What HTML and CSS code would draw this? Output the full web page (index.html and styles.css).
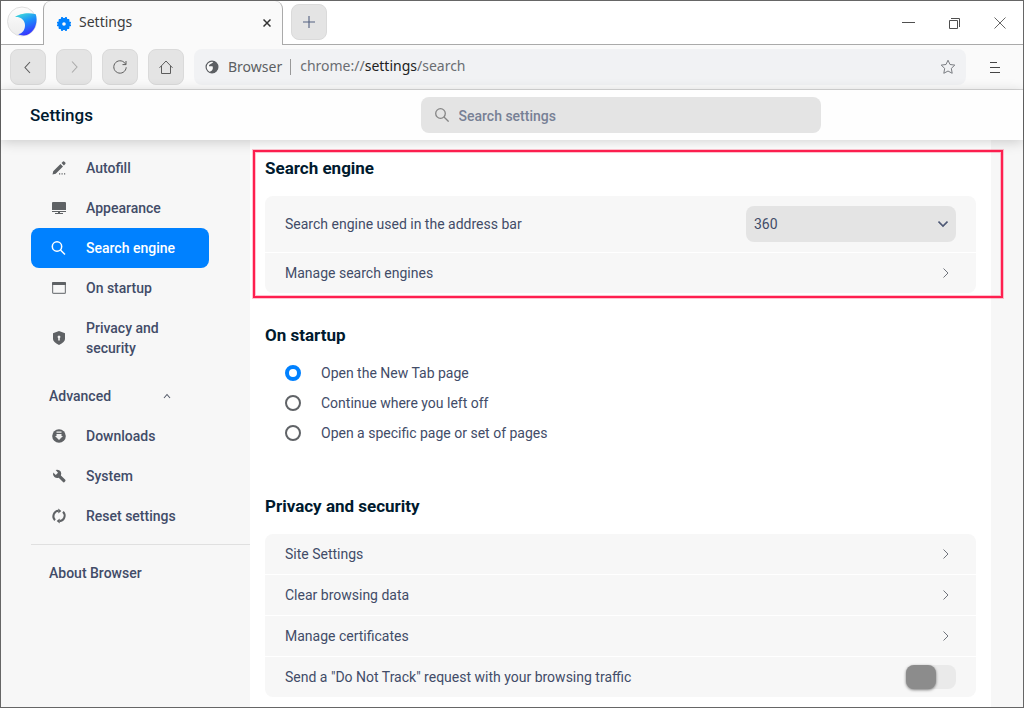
FILE: index.html
```html
<!DOCTYPE html>
<html lang="en">
<head>
<meta charset="utf-8">
<meta name="viewport" content="width=device-width, initial-scale=1">
<title>Settings</title>
<link rel="stylesheet" href="styles.css">
</head>
<body>
<div class="window">
  <div class="titlebar">
    <div class="logo">
      <svg width="32" height="32" viewBox="0 0 32 32" aria-hidden="true">
        <defs>
          <linearGradient id="wave" x1="0.2" y1="0" x2="0.6" y2="1">
            <stop offset="0" stop-color="#3fdcd8"/><stop offset="0.45" stop-color="#1b8dfb"/><stop offset="1" stop-color="#3a2bff"/>
          </linearGradient>
          <linearGradient id="disc" x1="0" y1="0" x2="0" y2="1">
            <stop offset="0" stop-color="#fdfdfd"/><stop offset="1" stop-color="#ececec"/>
          </linearGradient>
        </defs>
        <circle cx="16" cy="15.500" r="14.500" fill="url(#disc)" stroke="#e0e0e0"/>
        <path d="M9 11C13 7.800 22 5.800 29.800 8.200C32.500 17 28 28.500 18 29.500C15.500 29.600 13.500 29 12.300 28.300C17 27.500 19.800 22.500 18.800 17.500C17.800 13 14 10.500 9 11Z" fill="url(#wave)"/>
      </svg>
    </div>
    <div class="tab">
      <svg class="gear" width="14" height="14" viewBox="0 0 14 14" aria-hidden="true"><path fill="#0081ff" fill-rule="evenodd" d="M4.300 0H5.600L6.300 1H7.700L8.400 0H9.700L10.300 2H12L12.600 3.300L12 4.300L14 5V6.200L13 7L14 7.800V9L12 9.700L12.600 10.700L12 12H10.300L9.700 14H8.400L7.700 13H6.300L5.600 14H4.300L3.700 12H2L1.400 10.700L2 9.700L0 9V7.800L1 7L0 6.200V5L2 4.300L1.400 3.300L2 2H3.700ZM7 5.200A1.800 1.800 0 1 0 7 8.800A1.800 1.800 0 1 0 7 5.200Z"/></svg>
      <span class="tab-title">Settings</span>
      <button class="plain tab-close" aria-label="Close tab"><svg width="8" height="8" viewBox="0 0 8 8"><path d="M.5.5L7.500 7.500M7.500.5L.5 7.500" stroke="#333" stroke-width="1.500"/></svg></button>
    </div>
    <button class="square new-tab" aria-label="New tab"><svg width="12" height="12" viewBox="0 0 12 12"><path d="M6 0V12M0 6H12" stroke="#526080" stroke-width="1.100"/></svg></button>
    <div class="controls">
      <button class="plain control" aria-label="Minimize"><svg width="13" height="12" viewBox="0 0 13 12"><path d="M0 5.500H13" stroke="#4f4f4f"/></svg></button>
      <button class="plain control" aria-label="Restore"><svg width="11" height="11" viewBox="0 0 11 11" fill="none" stroke="#4f4f4f"><path d="M.5 2.500H8.500V10.500H.5ZM2 .5H10.500V9"/></svg></button>
      <button class="plain control" aria-label="Close"><svg width="12" height="12" viewBox="0 0 12 12"><path d="M.5.5L11.500 11.500M11.500.5L.5 11.500" stroke="#666"/></svg></button>
    </div>
  </div>

  <div class="toolbar">
    <button class="square" aria-label="Back"><svg width="16" height="16" viewBox="0 0 16 16" fill="none" stroke="#5c5c5c" stroke-width="1.100"><path d="M10 3L5 8.500L10 14"/></svg></button>
    <button class="square" aria-label="Forward" disabled><svg width="16" height="16" viewBox="0 0 16 16" fill="none" stroke="#aaa" stroke-width="1.100"><path d="M6 2.500L11 8L6 13.500"/></svg></button>
    <button class="square" aria-label="Reload"><svg width="16" height="16" viewBox="0 0 16 16" fill="none" stroke="#5c5c5c"><path d="M13.700 5.500A6.200 6.200 0 1 0 14.200 8.300M14 2V5.600H10.500"/></svg></button>
    <button class="square" aria-label="Home"><svg width="16" height="16" viewBox="0 0 16 16" fill="none" stroke="#5c5c5c"><path d="M1.500 8.800L8 2L14.500 8.800M3.500 7V14.500H12.500V7"/></svg></button>
    <div class="omnibox">
      <svg width="14" height="14" viewBox="0 0 14 14" aria-hidden="true"><circle cx="7" cy="7" r="5.900" fill="#fafafa" stroke="#5c5f63" stroke-width="1.200"/><path d="M8 1C9.500 2.500 6 3.200 4 5.300V6.200H7.500C8.300 8 8 10.500 4.800 11.800L6 13C10 13.500 13 10.500 13 7C13 3.500 10.500 1.200 8 1Z" fill="#5c5f63"/></svg>
      <span class="site">Browser</span>
      <span class="address">chrome://<b>settings</b>/search</span>
      <button class="plain star" aria-label="Bookmark this page"><svg width="16" height="16" viewBox="0 0 16 16" fill="none" stroke="#7a7d82" stroke-linejoin="round"><path d="M8 1.200L10 5.500L14.800 6.100L11.300 9.400L12.200 14.300L8 12L3.800 14.300L4.700 9.400L1.200 6.100L6 5.500Z"/></svg></button>
    </div>
    <button class="plain menu" aria-label="Menu"><svg width="10" height="12" viewBox="0 0 10 12"><path d="M0 1.500H7M0 6.500H10M0 11.500H10" stroke="#454545"/></svg></button>
  </div>

  <header class="header">
    <h1 class="page-title">Settings</h1>
    <label class="search">
      <svg width="14" height="14" viewBox="0 0 14 14" fill="none" stroke="#858585" stroke-width="1.300" aria-hidden="true"><circle cx="5.500" cy="5.500" r="4.800"/><path d="M9 9L13.600 13.600"/></svg>
      <input type="search" placeholder="Search settings" aria-label="Search settings">
    </label>
  </header>

  <div class="content">
    <nav class="sidebar" aria-label="Settings">
      <a class="item" href="#autofill"><svg width="16" height="16" viewBox="0 0 16 16" fill="#5f6265"><path d="M1.500 14.500L2.200 11.300L9.500 4L12 6.500L4.700 13.800ZM10.500 3L12 1.600Q12.700 1 13.400 1.700L14.300 2.600Q14.900 3.300 14.300 4L12.900 5.400Z"/><path d="M8 13.200H9.200V14.500H8ZM10.500 13.200H11.700V14.500H10.500ZM13 13.200H14.200V14.500H13Z"/></svg>Autofill</a>
      <a class="item" href="#appearance"><svg width="16" height="16" viewBox="0 0 16 16" fill="#5f6265"><path d="M1 3Q1 2 2 2H14Q15 2 15 3V10H1ZM1 11H15V12H9V13H12V14H4V13H7V12H1Z"/></svg>Appearance</a>
      <a class="item active" href="#search" aria-current="page"><svg width="16" height="16" viewBox="0 0 16 16" fill="none" stroke="#fff" stroke-width="1.500"><circle cx="6" cy="6.500" r="4.700"/><path d="M9.500 10L14 14.500"/></svg>Search engine</a>
      <a class="item" href="#startup"><svg width="16" height="16" viewBox="0 0 16 16"><rect x="1.600" y="2.600" width="12.800" height="10.800" rx="1" fill="none" stroke="#7c7f82" stroke-width="1.200"/><path d="M1 3Q1 2 2 2H14Q15 2 15 3V5H1Z" fill="#5f6265"/></svg>On startup</a>
      <a class="item" href="#privacy"><svg width="16" height="16" viewBox="0 0 16 16"><path d="M8 1L14 3.300V9Q14 12 8 15Q2 12 2 9V3.300Z" fill="#5f6265"/><path d="M7.200 10.500V8.200A1.400 1.400 0 1 1 8.800 8.200V10.500Z" fill="#f1f1f1"/></svg><span>Privacy and security</span></a>
      <button class="plain advanced" aria-expanded="true">Advanced <svg width="8" height="6" viewBox="0 0 8 6" fill="none" stroke="#555b6a" stroke-width="1.100"><path d="M1 5L4 1.500L7 5"/></svg></button>
      <a class="item" href="#downloads"><svg width="16" height="16" viewBox="0 0 16 16"><circle cx="8" cy="8" r="6.800" fill="#5f6265"/><path d="M5.500 3.500H10.500V4.700H5.500ZM5.500 6H10.500V8H12L8 12L4 8H5.500Z" fill="#f1f1f1"/></svg>Downloads</a>
      <a class="item" href="#system"><svg width="16" height="16" viewBox="0 0 16 16"><path d="M4.700 2Q8 1.200 9.700 3.600Q10.700 5.500 9.900 7.500L14.300 11.800Q14.900 12.500 14.200 13.200L13.300 14.200Q12.600 14.700 12 14.100L7.700 9.700Q5.300 10.500 3.400 8.900Q1.400 7 2.200 4.400L4.800 6.900L7 4.700Z" fill="#5f6265"/></svg>System</a>
      <a class="item" href="#reset"><svg width="16" height="16" viewBox="0 0 16 16"><g fill="none" stroke="#5f6265" stroke-width="2"><path d="M4 12.200A5.500 5.500 0 0 1 7.500 2.800M12 3.800A5.500 5.500 0 0 1 8.500 13.200"/></g><path d="M7.300 .5L10.300 3L7.300 5.500ZM8.700 10.500L5.700 13L8.700 15.500Z" fill="#5f6265"/></svg>Reset settings</a>
      <hr class="divider">
      <a class="about" href="#about">About Browser</a>
    </nav>

    <main class="main">
      <section class="section highlighted" id="search">
        <h2>Search engine</h2>
        <div class="card">
          <div class="row tall">
            <label for="engine">Search engine used in the address bar</label>
            <div class="select">
              <select id="engine"><option>360</option></select>
              <svg width="10" height="8" viewBox="0 0 10 8" fill="none" stroke="#4d5875" stroke-width="1.600" aria-hidden="true"><path d="M.5 1.500L5 6L9.500 1.500"/></svg>
            </div>
          </div>
          <a class="row" href="#engines">Manage search engines<svg class="chevron" width="20" height="12" viewBox="0 0 20 12"><path d="M7.500 1.500L12 6L7.500 10.500"/></svg></a>
        </div>
      </section>

      <section class="section startup" id="startup">
        <h2>On startup</h2>
        <div class="radios">
          <label class="radio"><input type="radio" name="startup" checked>Open the New Tab page</label>
          <label class="radio"><input type="radio" name="startup">Continue where you left off</label>
          <label class="radio"><input type="radio" name="startup">Open a specific page or set of pages</label>
        </div>
      </section>

      <section class="section" id="privacy">
        <h2>Privacy and security</h2>
        <div class="card">
          <a class="row" href="#site">Site Settings<svg class="chevron" width="20" height="12" viewBox="0 0 20 12"><path d="M7.500 1.500L12 6L7.500 10.500"/></svg></a>
          <a class="row" href="#clear">Clear browsing data<svg class="chevron" width="20" height="12" viewBox="0 0 20 12"><path d="M7.500 1.500L12 6L7.500 10.500"/></svg></a>
          <a class="row" href="#certificates">Manage certificates<svg class="chevron" width="20" height="12" viewBox="0 0 20 12"><path d="M7.500 1.500L12 6L7.500 10.500"/></svg></a>
          <div class="row"><label for="dnt">Send a "Do Not Track" request with your browsing traffic</label><input class="toggle" type="checkbox" role="switch" id="dnt"></div>
        </div>
      </section>
    </main>
  </div>
</div>
</body>
</html>
```
FILE: styles.css
```css
* {
  box-sizing: border-box;
}

body {
  margin: 0;
  background: #fff;
  color: #424c68;
  font: 14px/20px Roboto, sans-serif;
}

a {
  color: inherit;
  text-decoration: none;
}

svg {
  display: block;
  flex: none;
}

h1,
h2 {
  margin: 0;
  color: #001a2e;
  font-weight: 700;
  line-height: 20px;
}

.window {
  display: flex;
  flex-direction: column;
  min-height: 100vh;
  border: 1px solid #666;
}

/* Title bar */
.titlebar {
  display: flex;
  height: 44px;
  background: linear-gradient(#aaa, #aaa) bottom / 100% 1px no-repeat #fff;
}

.logo {
  width: 42px;
  padding: 5px;
}

.tab {
  display: flex;
  align-items: center;
  width: 240px;
  padding: 0 11px 0 13px;
  border: 1px solid #aaa;
  border-width: 0 1px;
  border-radius: 8px 8px 0 0;
  background: #fafafa;
  color: #3c3c3c;
  font: 14px/20px "Noto Sans", sans-serif;
}

.gear {
  margin-top: 2px;
}

.tab-title {
  flex: 1;
  padding: 0 0 2px 8px;
}

.plain {
  display: flex;
  align-items: center;
  justify-content: center;
  padding: 0;
  border: 0;
  background: none;
  color: inherit;
  font: inherit;
}

.square {
  display: flex;
  flex: none;
  align-items: center;
  justify-content: center;
  width: 36px;
  height: 36px;
  padding: 0;
  border: 1px solid #dadada;
  border-radius: 8px;
  background: #e4e4e4;
}

.new-tab {
  margin: 3px 8px;
}

.tab-close {
  height: 16px;
}

.controls {
  display: flex;
  align-items: center;
  margin-left: auto;
}

.control {
  width: 46px;
  height: 42px;
}

/* Toolbar */
.toolbar {
  display: flex;
  align-items: center;
  gap: 10px;
  height: 45px;
  padding: 0 9px;
  border-bottom: 1px solid #d8d8d8;
  background: #fafafa;
}

.omnibox {
  display: flex;
  flex: 1;
  align-items: center;
  height: 36px;
  padding: 0 10px 0 11px;
  border-radius: 8px;
  background: #f1f2f4;
  color: #6a6d72;
  font: 14px/16px "Noto Sans", sans-serif;
}

.site {
  margin: 0 9px;
  padding-right: 8px;
  border-right: 1px solid #999;
  color: #5c5f63;
}

.address {
  flex: 1;
  padding-bottom: 2px;
}

.address b {
  color: #222;
  font-weight: 400;
}

.menu {
  width: 38px;
  height: 36px;
}

/* Page header */
.header {
  position: relative;
  z-index: 1;
  display: grid;
  grid-template-columns: 249px minmax(0, 1fr) 32px;
  align-items: center;
  height: 50px;
  background: #fefefe;
  box-shadow: 0 2px 12px rgba(0, 0, 0, 0.18);
}

.page-title {
  padding-left: 29px;
  font-size: 17px;
  font-weight: 500;
}

.search {
  display: flex;
  justify-self: center;
  align-items: center;
  gap: 10px;
  width: 100%;
  max-width: 400px;
  height: 36px;
  padding: 0 14px;
  border-radius: 8px;
  background: #e4e4e4;
}

.search input {
  flex: 1;
  min-width: 0;
  padding: 2px 0 0;
  border: 0;
  outline: 0;
  background: none;
  color: #424c68;
  font: 500 14px/20px Roboto, sans-serif;
}

.search input::placeholder {
  color: #778095;
}

/* Sidebar */
.content {
  display: grid;
  flex: 1;
  grid-template-columns: 249px minmax(0, 1fr);
  padding-right: 32px;
  background: #f7f7f7;
}

.sidebar {
  display: flex;
  flex-direction: column;
  padding: 8px 0 8px 30px;
  font-weight: 500;
}

.item {
  display: flex;
  align-items: center;
  gap: 19px;
  width: 178px;
  min-height: 40px;
  padding: 10px 20px;
  border-radius: 8px;
}

.active {
  background: #0081ff;
  color: #fff;
}

.advanced {
  justify-content: space-between;
  width: 140px;
  height: 40px;
  margin: 8px 0 0;
  padding-left: 18px;
  font-weight: 500;
}

.divider {
  align-self: stretch;
  height: 1px;
  margin: 8px 0;
  border: 0;
  background: #e0e0e0;
}

.about {
  padding: 10px 18px;
}

/* Settings sections */
.main {
  display: flex;
  flex-direction: column;
  gap: 32px;
  padding: 18px 15px 10px;
  background: #fff;
}

.section h2 {
  margin-bottom: 18px;
  font-size: 17px;
}

.highlighted {
  position: relative;
}

.highlighted::after {
  position: absolute;
  inset: -8px -27px -5px -12px;
  border: 2px solid #ff1f4f;
  box-shadow: 0 0 0 1px #ff1f4f44, inset 0 0 0 1px #ff1f4f44;
  content: "";
  pointer-events: none;
}

.card {
  display: flex;
  flex-direction: column;
  gap: 1px;
  overflow: hidden;
  border-radius: 8px;
}

.row {
  display: flex;
  align-items: center;
  justify-content: space-between;
  min-height: 40px;
  padding: 0 20px;
  background: #f7f7f7;
}

.tall {
  min-height: 56px;
}

.chevron {
  fill: none;
  stroke: #70747c;
  stroke-width: 1;
}

.select {
  display: grid;
  align-items: center;
  width: 210px;
}

.select select,
.select svg {
  grid-area: 1 / 1;
}

.select select {
  width: 100%;
  height: 36px;
  padding: 0 8px;
  appearance: none;
  border: 0;
  border-radius: 8px;
  background: #e4e4e4;
  color: #424c68;
  font: 14px/20px Roboto, sans-serif;
}

.select svg {
  justify-self: end;
  margin-right: 8px;
  pointer-events: none;
}

.startup {
  margin-bottom: 21px;
}

.radios {
  display: grid;
  gap: 10px;
  padding-left: 20px;
}

.radio {
  display: flex;
  align-items: center;
  gap: 20px;
}

.radio input {
  width: 16px;
  height: 16px;
  margin: 0;
  appearance: none;
  border: 2px solid #606367;
  border-radius: 50%;
}

.radio input:checked {
  border: 4px solid #0081ff;
}

.toggle {
  width: 50px;
  height: 24px;
  margin: 0;
  appearance: none;
  border-radius: 8px;
  background: #eaeaea;
}

.toggle::before {
  display: block;
  width: 30px;
  height: 24px;
  border-radius: 8px;
  background: #8c8c8c;
  box-shadow: 0 1px 3px rgba(0, 0, 0, 0.5);
  content: "";
}

.toggle:checked::before {
  margin-left: 20px;
  background: #0081ff;
}
```
